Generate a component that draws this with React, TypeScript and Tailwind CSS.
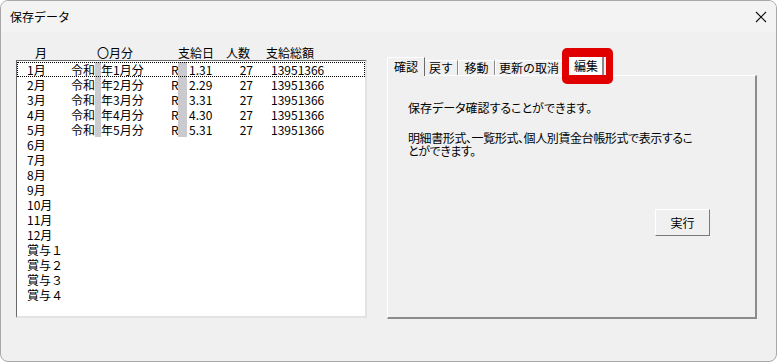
import React from "react";

const months = ["1月","2月","3月","4月","5月","6月","7月","8月","9月","10月","11月","12月","賞与１","賞与２","賞与３","賞与４"];
const data = [
  { y: "年1月分", d: "1.31" },
  { y: "年2月分", d: "2.29" },
  { y: "年3月分", d: "3.31" },
  { y: "年4月分", d: "4.30" },
  { y: "年5月分", d: "5.31" },
];

function Row({ i }: { i: number }) {
  const r = data[i];
  return (
    <div
      className={
        "flex h-[15px] leading-[15px] items-center overflow-hidden " +
        (i === 0 ? "outline outline-1 outline-dotted outline-black -outline-offset-1" : "")
      }
    >
      <span className="w-[54px] pl-[10px] shrink-0">{months[i]}</span>
      {r ? (
        <>
          <span className="w-[24px] shrink-0">令和</span>
          <span className="w-[6px] h-[15px] bg-[#cbcbcf] shrink-0" />
          <span className="w-[70px] shrink-0">{r.y}</span>
          <span className="w-[7px] shrink-0">R</span>
          <span className="w-[9px] h-[15px] bg-[#cbcbcf] shrink-0" />
          <span className="w-[2px] shrink-0" />
          <span className="w-[36px] shrink-0">{r.d}</span>
          <span className="w-[28px] shrink-0 text-right">27</span>
          <span className="w-[18px] shrink-0" />
          <span className="shrink-0">13951366</span>
        </>
      ) : null}
    </div>
  );
}

export default function App() {
  return (
    <div className="relative w-[777px] h-[362px] overflow-hidden rounded-lg border border-[#a8a8a8] bg-[#f0f0f0] text-[12px] text-black font-['Noto_Sans_CJK_JP','Noto_Sans',sans-serif] flex flex-col">
      {/* title bar */}
      <div className="h-[31px] shrink-0 bg-[#f3f3f3] flex items-center justify-between pl-[9px] pr-[6px]">
        <span className="text-[12px] leading-none">保存データ</span>
        <svg width="12" height="12" viewBox="0 0 12 12" className="mr-[3px]">
          <path d="M1 1 L11 11 M11 1 L1 11" stroke="#111" strokeWidth="1.1" />
        </svg>
      </div>

      <div className="flex pl-[15px] gap-[20px]">
        {/* left column */}
        <div className="w-[351px] shrink-0 flex flex-col">
          <div className="mt-[13px] h-[15px] leading-[15px] flex">
            <span className="w-[81px] pl-[19px] shrink-0">月</span>
            <span className="w-[81px] shrink-0">〇月分</span>
            <span className="w-[48px] shrink-0">支給日</span>
            <span className="w-[40px] shrink-0">人数</span>
            <span className="shrink-0">支給総額</span>
          </div>
          <div className="h-[258px] bg-white border-t border-l border-t-[#6a6a6a] border-l-[#6a6a6a] border-r-2 border-b-2 border-r-[#e3e3e3] border-b-[#e3e3e3] pt-[1px]">
            {months.map((_, i) => (
              <Row key={i} i={i} />
            ))}
          </div>
        </div>

        {/* right column: tab control */}
        <div className="w-[370px] shrink-0 flex flex-col mt-[25px]">
          <div className="h-[18px] flex items-end relative z-10">
            <div className="h-[19px] -mb-[1px] w-[38px] bg-[#f0f0f0] border-l border-t border-white border-r border-r-[#696969] flex items-center justify-center leading-none">
              確認
            </div>
            <div className="h-[15px] w-[33px] border-t border-white border-r border-r-[#8a8a8a] flex items-center justify-center leading-none">
              戻す
            </div>
            <div className="h-[15px] w-[37px] border-l border-t border-white border-r border-r-[#8a8a8a] flex items-center justify-center leading-none">
              移動
            </div>
            <div className="h-[15px] w-[68px] border-l border-t border-white border-r border-r-[#8a8a8a] flex items-center justify-center leading-none">
              更新の取消
            </div>
            <div className="h-[18px] w-[41px] bg-white border-r-2 border-r-[#8a8a8a] flex items-center justify-end pr-[4px] leading-none">
              編集
            </div>
          </div>
          <div className="h-[244px] border-l border-t border-white border-r-2 border-b-2 border-r-[#8c8c8c] border-b-[#8c8c8c] pl-[20px] pt-[25px] leading-[13px]">
            <div className="[font-feature-settings:'palt']">保存データ確認することができます。</div>
            <div className="mt-[17px] [font-feature-settings:'palt'] tracking-[-0.4px]">
              明細書形式、一覧形式、個人別賃金台帳形式で表示するこ
              <br />
              とができます。
            </div>
            <div className="flex justify-end pr-[45px] mt-[52px]">
              <div className="w-[55px] h-[27px] border border-white border-r-[#7a7a7a] border-b-[#7a7a7a] bg-[#f0f0f0] flex items-center justify-center">
                実行
              </div>
            </div>
          </div>
        </div>
      </div>

      {/* red highlight overlay */}
      <div className="absolute left-[561px] top-[47px] w-[51px] h-[36px] border-[7px] border-t-[9px] border-b-[9px] border-[#e10000] rounded-[5px] z-20" />
    </div>
  );
}
